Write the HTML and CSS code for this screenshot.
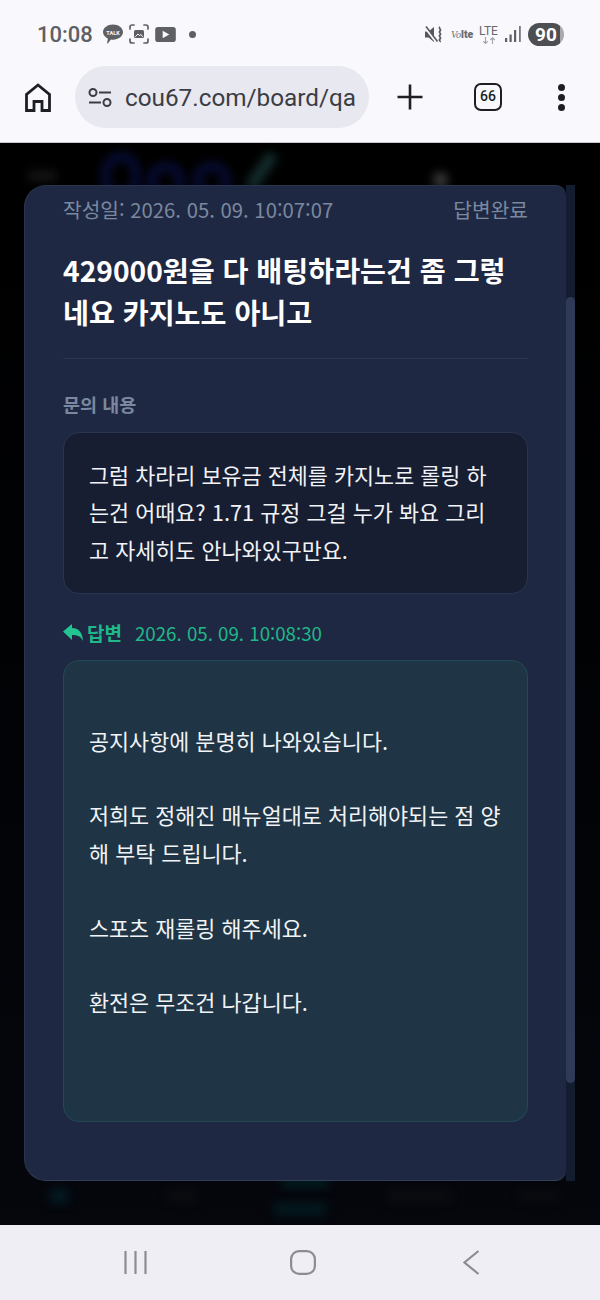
FILE: index.html
```html
<!DOCTYPE html>
<html lang="ko">
  <head>
    <meta charset="UTF-8" />
    <meta name="viewport" content="width=device-width, initial-scale=1.0" />
    <title>문의 내용</title>
    <link rel="stylesheet" href="styles.css">
  </head>
  <body>
    <div class="phone">
      <header class="chrome">
        <div class="status">
          <span class="clock">10:08</span>
          <svg class="st-talk" viewBox="0 0 20 20"><path d="M10 0.5c5.500 0 10 3.400 10 7.600s-4.500 7.600-10 7.600c-.7 0-1.300 0-2-.2L4.800 19.400c-.4.300-.8 0-.7-.4l.8-4.300C2 13.300 0 10.900 0 8.100 0 3.900 4.500.5 10 .5z" fill="#5f6063"/><text x="10" y="10.600" text-anchor="middle" class="talk-txt">TALK</text></svg>
          <svg class="st-shot" viewBox="0 0 20 20" fill="none" stroke="#5f6063" stroke-width="1.700" stroke-linecap="round"><path d="M1 5V3a2 2 0 0 1 2-2h2M15 1h2a2 2 0 0 1 2 2v2M19 15v2a2 2 0 0 1-2 2h-2M5 19H3a2 2 0 0 1-2-2v-2"/><rect x="5" y="6" width="10" height="8" rx="1.500" fill="#5f6063" stroke="none"/><path d="M6.500 12.500l2.500-2.500 1.500 1.500 1.500-1 1.500 2" stroke="#f8f8fd" stroke-width="1"/></svg>
          <svg class="st-yt" viewBox="0 0 22 16"><rect width="22" height="16" rx="3" fill="#5f6063"/><path d="M8 4l7 4-7 4z" fill="#f8f8fd"/></svg>
          <span class="st-dot"></span>
          <span class="status-gap"></span>
          <svg class="st-mute" viewBox="0 0 18 17"><path d="M0 5.500h3.500L9 1v15l-5.500-4.500H0z" fill="#55565a"/><path d="M0 1l11 14.500" stroke="#f8f8fd" stroke-width="2.800"/><path d="M1 .5l11.500 15" stroke="#55565a" stroke-width="1.500"/><path d="M15 1c-2 1.500 2 2.500 0 4s2 2.500 0 4 2 2.500 0 4 1 1.500 0 3" fill="none" stroke="#55565a" stroke-width="1.600"/></svg>
          <span class="st-volte"><i>Vo</i><b>lte</b></span>
          <span class="st-lte">LTE<svg viewBox="0 0 14 7" fill="none" stroke="#a2a3a8" stroke-width="1.100"><path d="M3.500 0v6.500M1.200 4.200l2.300 2.300 2.300-2.300M10.500 7V.7M8.200 3l2.300-2.300L12.800 3"/></svg></span>
          <svg class="st-signal" viewBox="0 0 16 16" fill="#5f6063"><rect x="0" y="12" width="2.200" height="4"/><rect x="4.500" y="8.500" width="2.200" height="7.500"/><rect x="9" y="4" width="2.200" height="12"/><rect x="14" y="0" width="1.800" height="16" fill="#77787c"/></svg>
          <span class="st-batt">90</span>
        </div>
        <div class="toolbar">
          <svg class="tb-home" viewBox="0 0 26 29" fill="none" stroke="#1d1f24" stroke-width="2.800" stroke-linejoin="miter"><path d="M1.500 27.500V11.500L13 2l11.500 9.500v16h-7.500V18.500H9v9z"/></svg>
          <div class="omnibox">
            <svg class="tune" viewBox="0 0 24 19" fill="none" stroke="#3b3d45" stroke-width="2"><circle cx="5" cy="4.500" r="3.500"/><path d="M11 4.500h12M1 14.500h12"/><circle cx="19" cy="14.500" r="3.500"/></svg>
            <span class="url">cou67.com/board/qa</span>
          </div>
          <svg class="tb-plus" viewBox="0 0 26 26" stroke="#1d1f24" stroke-width="2.600"><path d="M13 0.500v25M.500 13h25"/></svg>
          <span class="tb-tabs">66</span>
          <span class="tb-menu"><i></i><i></i><i></i></span>
        </div>
      </header>

      <main class="stage">
        <span class="ring ring-1"></span>
        <span class="ring ring-2"></span>
        <span class="ring ring-3"></span>
        <span class="blur blur-slash"></span>
        <span class="blur blur-menu"></span>
        <span class="blur blur-glow"></span>
        <span class="blur blur-nav1"></span>
        <span class="blur blur-nav2"></span>
        <span class="blur blur-nav2b"></span>
        <span class="blur blur-nav3"></span>
        <span class="blur blur-nav4"></span>
        <span class="blur blur-nav5"></span>

        <section class="modal">
          <div class="modal-body">
            <div class="meta">
              <span>작성일: 2026. 05. 09. 10:07:07</span>
              <span>답변완료</span>
            </div>
            <h1 class="title">429000원을 다 배팅하라는건 좀 그렇네요 카지노도 아니고</h1>
            <h2 class="label">문의 내용</h2>
            <div class="box box-q">그럼 차라리 보유금 전체를 카지노로 롤링 하는건 어때요? 1.71 규정 그걸 누가 봐요 그리고 자세히도 안나와있구만요.</div>
            <div class="reply-head">
              <svg class="reply-icon" viewBox="0 0 20 17"><path d="M9 0v4c6.500 0 10.500 4 11 13-2-4.500-5.500-6-11-6v5L0 7.500z" fill="#22c491"/></svg>
              <strong>답변</strong>
              <span>2026. 05. 09. 10:08:30</span>
            </div>
            <div class="box box-a">
<br>공지사항에 분명히 나와있습니다.<br><br>저희도 정해진 매뉴얼대로 처리해야되는 점 양해 부탁 드립니다.<br><br>스포츠 재롤링 해주세요.<br><br>환전은 무조건 나갑니다.<br><br><br>
            </div>
          </div>
          <div class="track"><span class="thumb"></span></div>
        </section>
      </main>

      <footer class="navbar">
        <svg class="nav-recent" viewBox="0 0 23 23" stroke="#8c8c92" stroke-width="2.200"><path d="M1.500 0v23M11.500 0v23M21.500 0v23"/></svg>
        <svg class="nav-home" viewBox="0 0 26 25" fill="none" stroke="#8c8c92" stroke-width="2.200"><rect x="1.100" y="1.100" width="23.800" height="22.800" rx="8"/></svg>
        <svg class="nav-back" viewBox="0 0 17 25" fill="none" stroke="#8c8c92" stroke-width="2.200"><path d="M15.500 1L1.500 12.500 15.500 24"/></svg>
      </footer>
    </div>
  </body>
</html>
```

FILE: styles.css
```css
* {
  box-sizing: border-box;
}

html, body {
  margin: 0;
  background: #000;
}

.phone {
  width: 600px;
  height: 1300px;
  display: flex;
  flex-direction: column;
  overflow: hidden;
  font-family: "Noto Sans CJK KR", "Noto Sans", sans-serif;
}

/* browser chrome */
.chrome {
  height: 143px;
  flex: none;
  background: #f8f8fd;
  border-bottom: 1px solid #c9c9cd;
}

.status {
  height: 66px;
  padding: 2px 36px 0 37px;
  display: flex;
  align-items: center;
  color: #5f6063;
}

.clock {
  font-family: Roboto, sans-serif;
  font-size: 22px;
  font-weight: 500;
  width: 66px;
}

.status svg {
  flex: none;
  display: block;
}

.st-talk { width: 20px; height: 20px; }
.talk-txt { font-family: Roboto, sans-serif; font-size: 5.500px; font-weight: 700; fill: #f8f8fd; }
.st-shot { width: 20px; height: 20px; margin-left: 6px; }
.st-yt { width: 21px; height: 15px; margin-left: 6px; }

.st-dot {
  width: 7px;
  height: 7px;
  margin-left: 13px;
  border-radius: 50%;
  background: #5f6063;
}

.status-gap { flex: 1; }
.st-mute { width: 18px; height: 17px; }

.st-volte {
  width: 23px;
  margin-left: 8px;
  font-family: "Liberation Serif", serif;
  font-size: 10px;
  white-space: nowrap;
  color: #6b6c70;
}

.st-volte b {
  font-family: Roboto, sans-serif;
  font-size: 10.500px;
  font-weight: 900;
}

.st-lte {
  width: 19px;
  margin-left: 5px;
  font-family: Roboto, sans-serif;
  font-size: 12px;
  line-height: 12px;
  color: #66676b;
  display: flex;
  flex-direction: column;
  align-items: center;
}

.st-lte svg { width: 14px; height: 7px; }
.st-signal { width: 16px; height: 16px; margin-left: 7px; }

.st-batt {
  width: 36px;
  height: 23px;
  margin-left: 7px;
  border-radius: 12px;
  background: linear-gradient(to right, #4e4f53 90%, #a9aaae 90%);
  color: #fff;
  font-family: Roboto, sans-serif;
  font-size: 19px;
  font-weight: 700;
  line-height: 23px;
  text-align: center;
}

.toolbar {
  height: 76px;
  padding: 0 0 14px 25px;
  display: flex;
  align-items: center;
}

.tb-home { width: 26px; height: 29px; flex: none; }

.omnibox {
  width: 294px;
  height: 62px;
  margin-left: 24px;
  padding-left: 13px;
  border-radius: 31px;
  background: #e8e8f0;
  display: flex;
  align-items: center;
  flex: none;
}

.tune { width: 24px; height: 19px; flex: none; }

.url {
  margin-left: 13px;
  font-family: Roboto, sans-serif;
  font-size: 24.300px;
  color: #3b3d45;
  white-space: nowrap;
}

.tb-plus { width: 26px; height: 26px; margin-left: 28px; flex: none; }

.tb-tabs {
  width: 28px;
  height: 28px;
  margin-left: 51px;
  flex: none;
  border: 2.500px solid #1d1f24;
  border-radius: 7px;
  font-family: Roboto, sans-serif;
  font-size: 14px;
  font-weight: 500;
  line-height: 23px;
  text-align: center;
  color: #1d1f24;
}

.tb-menu {
  margin-left: 56px;
  display: flex;
  flex-direction: column;
  gap: 3px;
}

.tb-menu i {
  width: 7px;
  height: 7px;
  border-radius: 50%;
  background: #1d1f24;
}

/* page behind the modal, all out of focus */
.stage {
  position: relative;
  flex: 1;
  padding: 42px 25px 0 24px;
  background: linear-gradient(#000 0, #020306 60%, #05070d 100%);
  overflow: hidden;
}

.ring {
  position: absolute;
  top: 8px;
  border: 11px solid #060a2c;
  border-radius: 50%;
  filter: blur(4px);
}

.ring-1 { left: 100px; width: 42px; height: 50px; }
.ring-2 { left: 146px; top: 18px; width: 40px; height: 40px; }
.ring-3 { left: 192px; top: 18px; width: 40px; height: 40px; }

.blur {
  position: absolute;
  filter: blur(5px);
}

.blur-slash { left: 256px; top: 8px; width: 11px; height: 40px; background: #14302f; transform: rotate(35deg); }
.blur-menu { left: 28px; top: 28px; width: 28px; height: 10px; background: #151517; }
.blur-glow { left: 434px; top: 30px; width: 13px; height: 14px; background: #3a3a3a; }
.blur-nav1 { left: 50px; top: 1046px; width: 18px; height: 14px; background: #031a22; }
.blur-nav2 { left: 282px; top: 1034px; width: 46px; height: 10px; background: #021f22; }
.blur-nav2b { left: 274px; top: 1060px; width: 52px; height: 12px; background: #021a1f; }
.blur-nav3 { left: 168px; top: 1048px; width: 28px; height: 10px; background: #0c0d11; }
.blur-nav4 { left: 388px; top: 1048px; width: 62px; height: 10px; background: #0c0d11; }
.blur-nav5 { left: 520px; top: 1048px; width: 38px; height: 10px; background: #0b0c10; }

.modal {
  position: relative;
  display: flex;
  height: 996px;
}

.modal-body {
  flex: 1;
  min-width: 0;
  padding: 7px 38px 0 38px;
  background: #1f2842;
  border: 1px solid #2a3550;
  border-width: 1px 0 1px 1px;
  border-bottom-color: #353f5a;
  border-radius: 22px 10px 10px 22px;
  color: #f1f3f7;
}

.track {
  width: 9px;
  padding: 112px 0 98px;
  flex: none;
  background: #141d30;
}

.thumb {
  display: block;
  height: 100%;
  border-radius: 5px;
  background: #2e3a57;
}

.meta {
  display: flex;
  justify-content: space-between;
  font-size: 20.300px;
  line-height: 32px;
  color: #7a88a0;
}

.title {
  margin: 0;
  padding: 24px 0 25px;
  border-bottom: 1px solid #2b3650;
  font-size: 28.200px;
  font-weight: 700;
  line-height: 42px;
  color: #fff;
}

.label {
  margin: 31px 0 14px;
  font-size: 18.500px;
  font-weight: 700;
  line-height: 28px;
  color: #7a88a0;
}

.box {
  border-radius: 16px;
  padding: 23px 25px 25px;
  font-size: 21.800px;
  line-height: 37.400px;
  border: 1px solid;
}

.box-q {
  background: #181e32;
  border-color: #2a3550;
}

.box-a {
  background: #1f3545;
  border-color: #214a55;
}

.reply-head {
  height: 66px;
  padding-top: 11px;
  display: flex;
  align-items: center;
  color: #1fb88a;
}

.reply-icon { width: 20px; height: 17px; flex: none; }

.reply-head strong {
  margin-left: 4px;
  font-size: 19px;
  font-weight: 700;
}

.reply-head span {
  margin-left: 13px;
  font-size: 18.700px;
}

/* android nav */
.navbar {
  height: 75px;
  flex: none;
  background: #eeeef4;
  display: flex;
  align-items: center;
  padding: 0 0 0 124px;
}

.nav-recent { width: 23px; height: 23px; flex: none; }
.nav-home { width: 26px; height: 25px; margin-left: 143px; flex: none; }
.nav-back { width: 17px; height: 25px; margin-left: 147px; flex: none; }
```
